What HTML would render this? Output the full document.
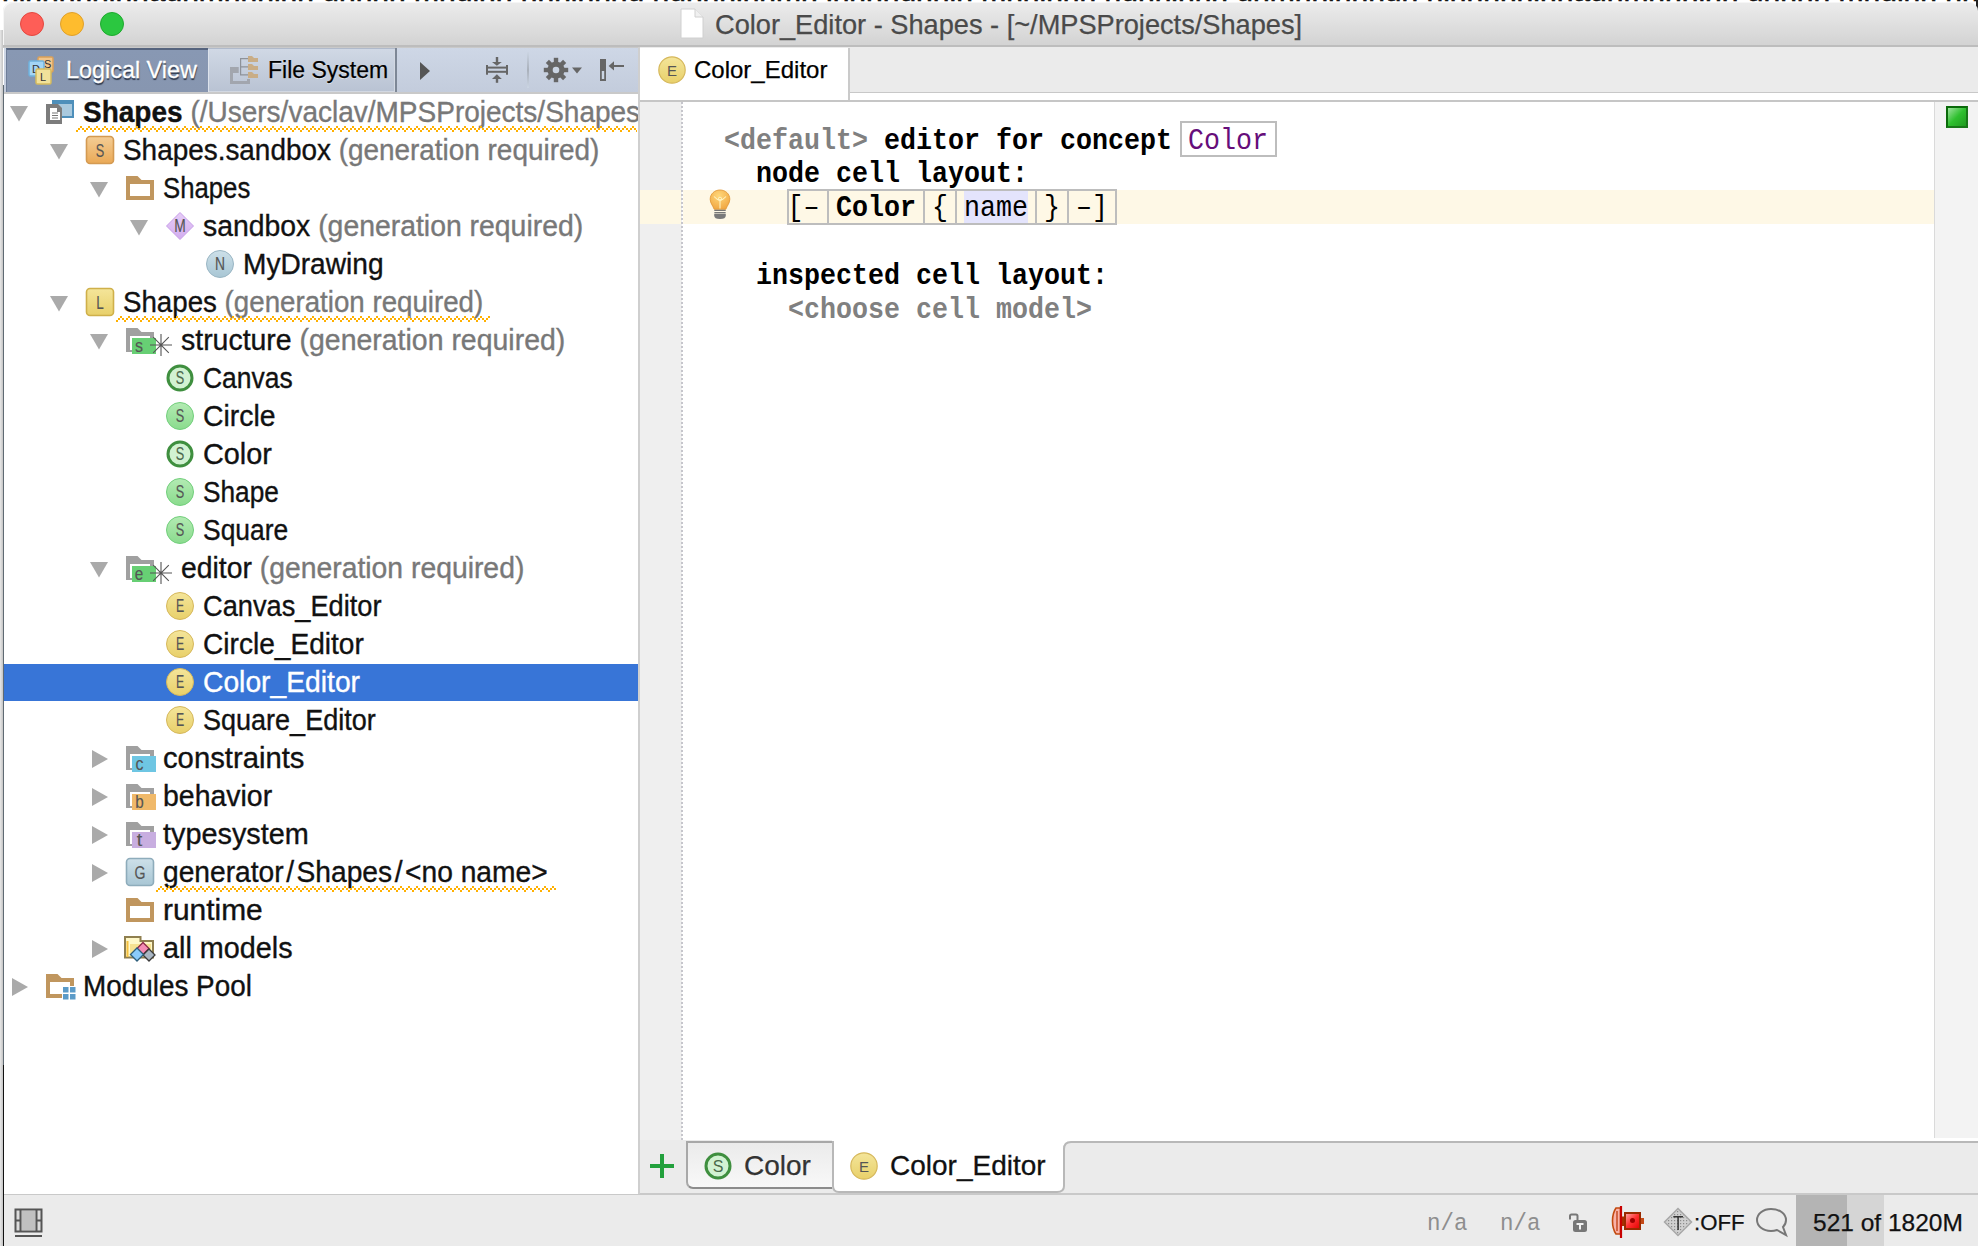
<!DOCTYPE html>
<html><head><meta charset="utf-8">
<style>
*{margin:0;padding:0;box-sizing:border-box}
html,body{width:1978px;height:1246px;overflow:hidden;background:#fff;font-family:"Liberation Sans",sans-serif}
.a{position:absolute}
svg.a{overflow:visible}
.row{position:absolute;height:38px;font-size:28px;line-height:38px;white-space:nowrap;color:#111;transform:scaleY(1.03);transform-origin:0 28.7px;-webkit-text-stroke:0.35px currentColor}
.g{color:#787878}
.m{position:absolute;font-family:"Liberation Mono",monospace;font-size:26.67px;line-height:normal;white-space:nowrap;color:#000;transform:scaleY(1.1);transform-origin:0 22.2px}
.mb{font-weight:bold}
.wavy{height:6px}
</style></head>
<body>
<svg width="0" height="0" style="position:absolute">
<defs>
 <linearGradient id="gOr" x1="0" y1="0" x2="0" y2="1"><stop offset="0" stop-color="#f4cd95"/><stop offset="1" stop-color="#eaa956"/></linearGradient>
 <linearGradient id="gYe" x1="0" y1="0" x2="0" y2="1"><stop offset="0" stop-color="#f4e59a"/><stop offset="1" stop-color="#e8d06a"/></linearGradient>
 <linearGradient id="gGr" x1="0" y1="0" x2="0" y2="1"><stop offset="0" stop-color="#b3ebb3"/><stop offset="1" stop-color="#8adb8d"/></linearGradient>
 <linearGradient id="gBl" x1="0" y1="0" x2="0" y2="1"><stop offset="0" stop-color="#cde0e9"/><stop offset="1" stop-color="#a8c6d4"/></linearGradient>
 <linearGradient id="gPu" x1="0" y1="0" x2="0" y2="1"><stop offset="0" stop-color="#e6cdf7"/><stop offset="1" stop-color="#d2acef"/></linearGradient>
 <pattern id="wave" width="8" height="6" patternUnits="userSpaceOnUse"><rect x="0" y="4" width="2" height="2" fill="#ffb000"/><rect x="2" y="2" width="2" height="2" fill="#ffb000"/><rect x="4" y="0" width="2" height="2" fill="#ffb000"/><rect x="6" y="2" width="2" height="2" fill="#ffb000"/></pattern>
 <symbol id="i-proj" viewBox="0 0 60 36"><rect x="11" y="7" width="20" height="16" fill="#a9c9de" stroke="#4e8fba" stroke-width="2"/><rect x="10" y="6" width="22" height="4" fill="#4e8fba"/><path d="M4 10H16L20 14V30H4Z" fill="#7c7c7c"/><path d="M8 14H15V18H18V26H8Z" fill="#fff"/><path d="M10 19h6M10 21.5h6M10 24h6" stroke="#777" stroke-width="1.2"/></symbol>
 <symbol id="i-sbox" viewBox="0 0 60 36"><rect x="4.5" y="4.5" width="27" height="27" rx="3.5" fill="url(#gOr)" stroke="#d49a52" stroke-width="1.6"/><text x="18" y="25" font-size="17.5" text-anchor="middle" fill="#555" font-family="Liberation Sans" textLength="8.5" lengthAdjust="spacingAndGlyphs" stroke="#555" stroke-width="0.15">S</text></symbol>
 <symbol id="i-lbox" viewBox="0 0 60 36"><rect x="4.5" y="4.5" width="27" height="27" rx="3.5" fill="url(#gYe)" stroke="#cfb04a" stroke-width="1.6"/><text x="18" y="25" font-size="17.5" text-anchor="middle" fill="#555" font-family="Liberation Sans" textLength="7.5" lengthAdjust="spacingAndGlyphs" stroke="#555" stroke-width="0.15">L</text></symbol>
 <symbol id="i-gbox" viewBox="0 0 60 36"><rect x="4.5" y="4.5" width="27" height="27" rx="3.5" fill="url(#gBl)" stroke="#8eacbb" stroke-width="1.6"/><text x="18" y="25" font-size="17.5" text-anchor="middle" fill="#555" font-family="Liberation Sans" textLength="11" lengthAdjust="spacingAndGlyphs" stroke="#555" stroke-width="0.15">G</text></symbol>
 <symbol id="i-fold" viewBox="0 0 60 36"><path d="M4 6H15.5L19.5 10H32V30H4Z" fill="#c0965e"/><rect x="8" y="14" width="20" height="12" fill="#fff"/></symbol>
 <symbol id="i-mpool" viewBox="0 0 60 36"><path d="M4 6H15.5L19.5 10H32V30H4Z" fill="#c0965e"/><rect x="8" y="14" width="20" height="12" fill="#fff"/><rect x="20" y="18" width="14" height="14" fill="#fff"/><rect x="21" y="19" width="5.5" height="5.5" fill="#5b9bc8"/><rect x="28" y="19" width="5.5" height="5.5" fill="#5b9bc8"/><rect x="21" y="26" width="5.5" height="5.5" fill="#5b9bc8"/><rect x="28" y="26" width="5.5" height="5.5" fill="#5b9bc8"/></symbol>
 <symbol id="i-mdia" viewBox="0 0 60 36"><path d="M18 4.5L31.5 18L18 31.5L4.5 18Z" fill="url(#gPu)" stroke="#c79de8" stroke-linejoin="round"/><text x="18" y="24" font-size="17.5" text-anchor="middle" fill="#555" font-family="Liberation Sans" textLength="11.5" lengthAdjust="spacingAndGlyphs" stroke="#555" stroke-width="0.15">M</text></symbol>
 <symbol id="i-ncir" viewBox="0 0 60 36"><circle cx="18" cy="18" r="13.5" fill="url(#gBl)" stroke="#9ab6c4"/><text x="18" y="24" font-size="17.5" text-anchor="middle" fill="#555" font-family="Liberation Sans" textLength="10" lengthAdjust="spacingAndGlyphs" stroke="#555" stroke-width="0.15">N</text></symbol>
 <symbol id="i-scir" viewBox="0 0 60 36"><circle cx="18" cy="18" r="13.5" fill="url(#gGr)" stroke="#72cf7c"/><text x="18" y="24" font-size="17.5" text-anchor="middle" fill="#555" font-family="Liberation Sans" textLength="8.5" lengthAdjust="spacingAndGlyphs" stroke="#555" stroke-width="0.15">S</text></symbol>
 <symbol id="i-sdark" viewBox="0 0 60 36"><circle cx="18" cy="18" r="12" fill="#d2f2d2" stroke="#3f8f3f" stroke-width="3"/><text x="18" y="24" font-size="17.5" text-anchor="middle" fill="#4a6a4a" font-family="Liberation Sans" textLength="8.5" lengthAdjust="spacingAndGlyphs" stroke="#555" stroke-width="0.15">S</text></symbol>
 <symbol id="i-ecir" viewBox="0 0 60 36"><circle cx="18" cy="18" r="13.5" fill="url(#gYe)" stroke="#d6b85c"/><text x="18" y="24" font-size="17.5" text-anchor="middle" fill="#555" font-family="Liberation Sans" textLength="8.2" lengthAdjust="spacingAndGlyphs" stroke="#555" stroke-width="0.15">E</text></symbol>
 <symbol id="i-gfold" viewBox="0 0 60 36"><path d="M4 6H15.5L19.5 10H32V30H4Z" fill="#a0a0a0"/><rect x="8" y="14" width="20" height="14" fill="#fff"/></symbol>
 <symbol id="i-fs" viewBox="0 0 60 36"><path d="M4 6H15.5L19.5 10H32V30H4Z" fill="#a0a0a0"/><rect x="8" y="14" width="20" height="14" fill="#fff"/><rect x="10" y="16" width="24" height="16" fill="#67cf74"/><text x="17" y="30" font-size="17.5" text-anchor="middle" fill="#555" font-family="Liberation Sans" textLength="8" lengthAdjust="spacingAndGlyphs" stroke="#555" stroke-width="0.15">s</text><path d="M39 12V34M28 23H50M31.2 15.2L46.8 30.8M46.8 15.2L31.2 30.8" stroke="#555" stroke-width="1.1"/></symbol>
 <symbol id="i-fe" viewBox="0 0 60 36"><path d="M4 6H15.5L19.5 10H32V30H4Z" fill="#a0a0a0"/><rect x="8" y="14" width="20" height="14" fill="#fff"/><rect x="10" y="16" width="24" height="16" fill="#67cf74"/><text x="17" y="30" font-size="17.5" text-anchor="middle" fill="#555" font-family="Liberation Sans" textLength="8.5" lengthAdjust="spacingAndGlyphs" stroke="#555" stroke-width="0.15">e</text><path d="M39 12V34M28 23H50M31.2 15.2L46.8 30.8M46.8 15.2L31.2 30.8" stroke="#555" stroke-width="1.1"/></symbol>
 <symbol id="i-fc" viewBox="0 0 60 36"><path d="M4 6H15.5L19.5 10H32V30H4Z" fill="#a0a0a0"/><rect x="8" y="14" width="20" height="14" fill="#fff"/><rect x="10" y="16" width="24" height="16" fill="#6ec6e3"/><text x="17.5" y="30" font-size="17.5" text-anchor="middle" fill="#555" font-family="Liberation Sans" textLength="8" lengthAdjust="spacingAndGlyphs" stroke="#555" stroke-width="0.15">c</text></symbol>
 <symbol id="i-fb" viewBox="0 0 60 36"><path d="M4 6H15.5L19.5 10H32V30H4Z" fill="#a0a0a0"/><rect x="8" y="14" width="20" height="14" fill="#fff"/><rect x="10" y="16" width="24" height="16" fill="#f0b96a"/><text x="17.5" y="30" font-size="17.5" text-anchor="middle" fill="#555" font-family="Liberation Sans" textLength="8.5" lengthAdjust="spacingAndGlyphs" stroke="#555" stroke-width="0.15">b</text></symbol>
 <symbol id="i-ft" viewBox="0 0 60 36"><path d="M4 6H15.5L19.5 10H32V30H4Z" fill="#a0a0a0"/><rect x="8" y="14" width="20" height="14" fill="#fff"/><rect x="10" y="16" width="24" height="16" fill="#c8aee0"/><text x="17.5" y="30" font-size="17.5" text-anchor="middle" fill="#555" font-family="Liberation Sans" textLength="5.5" lengthAdjust="spacingAndGlyphs" stroke="#555" stroke-width="0.15">t</text></symbol>
 <symbol id="i-allm" viewBox="0 0 60 36"><path d="M3 7H18.5V11H31V27.5H3Z" fill="#fff8c8" stroke="#8f7f4f" stroke-width="2"/><rect x="4.5" y="11" width="2" height="16" fill="#f5c040"/><rect x="8" y="14" width="21" height="12" fill="#f6e291"/><path d="M21 12.5L27 18.5L21 24.5L15 18.5Z" fill="#f58cb4" stroke="#8a2a48" stroke-width="1.3"/><path d="M27 19L33 25L27 31L21 25Z" fill="#a9b6c3" stroke="#3a3a3a" stroke-width="1.3"/><path d="M15 18L21.5 24.5L15 31L8.5 24.5Z" fill="#8acbfa" stroke="#2d5e7a" stroke-width="1.3"/></symbol>
</defs>
</svg>

<!-- background behind window -->
<div class="a" style="left:2px;top:-22px;width:1976px;height:25px;font-size:30px;line-height:25px;color:#111;white-space:nowrap;overflow:hidden;-webkit-text-stroke:0.6px #111">nlhnnhnlnnaunmnnnlhn unnhn mnulnh nnnlnhnu nunhnlnnmn lnnhnunnln mnnlnhn nunnlhnn unmnnlnhnun nlhnnhnlnnaunmnnnlhn unnhn mnulnh nnnlnhnu nunhnlnnmn lnnhnunnln mnnlnhn nunnlhnn</div><div class="a" style="left:1975.5px;top:0;width:2.5px;height:11px;background:#222"></div>
<div class="a" style="left:0;top:30px;width:2.5px;height:1216px;background:linear-gradient(90deg,#e8e8e8,#c4c4c4)"></div><div class="a" style="left:2.5px;top:85px;width:1.5px;height:980px;background:#5f6a73"></div>
<div class="a" style="left:2.5px;top:1065px;width:1.5px;height:181px;background:#111"></div>

<!-- title bar -->
<div class="a" style="left:3px;top:1.5px;width:1975px;height:45.5px;background:linear-gradient(#ececec,#d3d3d3);border-radius:9px 9px 0 0;border-bottom:2px solid #bdbdbd;box-shadow:inset 1px 1px 0 #f6f6f6"></div>
<div class="a" style="left:20px;top:12px;width:24px;height:24px;border-radius:50%;background:#fe5e57;border:1px solid #e4473f"></div>
<div class="a" style="left:60px;top:12px;width:24px;height:24px;border-radius:50%;background:#febc2e;border:1px solid #e0a02a"></div>
<div class="a" style="left:100px;top:12px;width:24px;height:24px;border-radius:50%;background:#2bc740;border:1px solid #1eaa2e"></div>
<svg class="a" style="left:680px;top:8px" width="24" height="31"><path d="M1 1H15L23 9V30H1Z" fill="#fff" stroke="#d0d0d0" stroke-width="1"/><path d="M15 1V9H23" fill="#f0f0f0" stroke="#d0d0d0"/></svg>
<div class="a" style="left:715px;top:8.5px;font-size:27.2px;line-height:normal;color:#4a4a4a;white-space:nowrap;-webkit-text-stroke:0.25px currentColor">Color_Editor - Shapes - [~/MPSProjects/Shapes]</div>

<!-- left toolbar -->
<div class="a" style="left:3px;top:46.5px;width:1975px;height:1.5px;background:#c9c9c9"></div><div class="a" style="left:4px;top:48px;width:634px;height:46px;background:linear-gradient(#ced7e6,#c3ccdc);border-bottom:2px solid #c9c9c9"></div>
<div class="a" style="left:6px;top:48px;width:202px;height:44px;background:linear-gradient(#8898b3,#8796b0);border-top:2px solid #56647e;border-left:1px solid #6e7d98"></div>
<div class="a" style="left:208px;top:48px;width:187px;height:44px;background:linear-gradient(#d0d8e5,#b9c3d3);border-top:1px solid #b0bacb;box-shadow:inset 1px 0 0 #dde3ec,inset -1px -1px 0 #d2d8e2"></div>
<div class="a" style="left:395px;top:48px;width:2px;height:44px;background:#7d8796"></div>
<!-- toolbar icons -->
<svg class="a" style="left:27px;top:55px" width="32" height="32"><rect x="11" y="2" width="15" height="15" rx="1.5" fill="#f2c58a" stroke="#d9a05a" stroke-width="1.5"/><text x="17" y="13" font-size="11" fill="#333" font-family="Liberation Sans">S</text><rect x="2" y="6" width="15" height="15" rx="1.5" fill="#a3d5f5" stroke="#6fb1dd" stroke-width="1.5"/><text x="5" y="18" font-size="11" fill="#333" font-family="Liberation Sans">D</text><rect x="9" y="14" width="15" height="15" rx="1.5" fill="#f1e19a" stroke="#d5bb5e" stroke-width="1.5"/><text x="13" y="26" font-size="11" fill="#333" font-family="Liberation Sans">L</text></svg>
<div class="a" style="left:66px;top:56.5px;font-size:23.4px;line-height:normal;color:#fff;white-space:nowrap;text-shadow:0.5px 1.5px 1px #2c3648;-webkit-text-stroke:0.3px #fff">Logical View</div>
<svg class="a" style="left:228px;top:54px" width="32" height="32"><path d="M2 13H10.7V19H5V27H19V25H22V30H2Z" fill="#a2a6ae"/><path d="M12.6 4.5V21M12 4.6H20M12 12.8H20M12 20.8H20" stroke="#8e9299" stroke-width="1.2" fill="none"/><path d="M20 2H24L26 4H30V8H20Z M20 10H24L26 12H30V16H20Z M20 18H24L26 20H30V24H20Z" fill="#c9ad86"/></svg>
<div class="a" style="left:268px;top:57px;font-size:23px;line-height:normal;color:#000;white-space:nowrap;text-shadow:0 1px 0 #e8ecf2;-webkit-text-stroke:0.25px currentColor">File System</div>
<svg class="a" style="left:419px;top:61px" width="12" height="20"><path d="M1 1L11 10L1 19Z" fill="#555"/></svg>
<svg class="a" style="left:485px;top:56px" width="24" height="28"><g fill="#666"><rect x="10.8" y="1" width="2.4" height="5.5"/><path d="M7 6H16.8L11.9 9.8Z"/><rect x="1" y="10.6" width="22" height="2"/><rect x="1" y="14.8" width="22" height="2"/><rect x="1" y="9" width="2" height="9.7"/><rect x="21" y="9" width="2" height="9.7"/><path d="M7 23.1H16.8L11.9 18.3Z"/><rect x="10.8" y="22.5" width="2.4" height="4.3"/></g></svg>
<div class="a" style="left:526.5px;top:52px;width:2.5px;height:36px;background:linear-gradient(#cbd5e3,#a9b0bb,#cbd5e3)"></div>
<svg class="a" style="left:543px;top:57px" width="44" height="26"><g fill="#666"><circle cx="13" cy="13" r="8.6"/><rect x="10.8" y="0.8" width="4.4" height="6" transform="rotate(0 13 13)"/><rect x="10.8" y="0.8" width="4.4" height="6" transform="rotate(45 13 13)"/><rect x="10.8" y="0.8" width="4.4" height="6" transform="rotate(90 13 13)"/><rect x="10.8" y="0.8" width="4.4" height="6" transform="rotate(135 13 13)"/><rect x="10.8" y="0.8" width="4.4" height="6" transform="rotate(180 13 13)"/><rect x="10.8" y="0.8" width="4.4" height="6" transform="rotate(225 13 13)"/><rect x="10.8" y="0.8" width="4.4" height="6" transform="rotate(270 13 13)"/><rect x="10.8" y="0.8" width="4.4" height="6" transform="rotate(315 13 13)"/><path d="M29 10.5h10l-5 6z"/></g><circle cx="13" cy="13" r="3.3" fill="#cbd5e3"/></svg>
<svg class="a" style="left:599px;top:58px" width="30" height="26"><rect x="1" y="1" width="6" height="22" fill="#666"/><rect x="2.8" y="13" width="2.4" height="8" fill="#cbd5e3"/><path d="M9.6 8L15 3.3V12.6Z" fill="#666"/><rect x="14.5" y="7" width="10.5" height="2" fill="#666"/></svg>

<!-- tree -->
<div class="a" style="left:4px;top:94px;width:634px;height:1100px;background:#fff"></div>
<svg class="a" style="left:10px;top:106px" width="18" height="16"><path d="M0 0H18L9 15.5Z" fill="#aaa"/></svg>
<svg class="a" style="left:42px;top:94px" width="60" height="36"><use href="#i-proj" width="60" height="36"/></svg>
<div class="row" style="left:83px;top:94px"><b>Shapes</b> <span class="g">(/Users/vaclav/MPSProjects/Shapes</span></div>
<svg class="a" style="left:76px;top:126px" width="561" height="6"><rect width="561" height="6" fill="url(#wave)"/></svg>
<svg class="a" style="left:50px;top:144px" width="18" height="16"><path d="M0 0H18L9 15.5Z" fill="#aaa"/></svg>
<svg class="a" style="left:82px;top:132px" width="60" height="36"><use href="#i-sbox" width="60" height="36"/></svg>
<div class="row" style="left:123px;top:132px;transform:scale(0.9966,1.03)">Shapes.sandbox <span class="g">(generation required)</span></div>
<svg class="a" style="left:90px;top:182px" width="18" height="16"><path d="M0 0H18L9 15.5Z" fill="#aaa"/></svg>
<svg class="a" style="left:122px;top:170px" width="60" height="36"><use href="#i-fold" width="60" height="36"/></svg>
<div class="row" style="left:163px;top:170px;transform:scale(0.9191,1.03)">Shapes</div>
<svg class="a" style="left:130px;top:220px" width="18" height="16"><path d="M0 0H18L9 15.5Z" fill="#aaa"/></svg>
<svg class="a" style="left:162px;top:208px" width="60" height="36"><use href="#i-mdia" width="60" height="36"/></svg>
<div class="row" style="left:203px;top:208px;transform:scale(1.0134,1.03)">sandbox <span class="g">(generation required)</span></div>
<svg class="a" style="left:202px;top:246px" width="60" height="36"><use href="#i-ncir" width="60" height="36"/></svg>
<div class="row" style="left:243px;top:246px;transform:scale(1.0036,1.03)">MyDrawing</div>
<svg class="a" style="left:50px;top:296px" width="18" height="16"><path d="M0 0H18L9 15.5Z" fill="#aaa"/></svg>
<svg class="a" style="left:82px;top:284px" width="60" height="36"><use href="#i-lbox" width="60" height="36"/></svg>
<div class="row" style="left:123px;top:284px;transform:scale(0.9890,1.03)">Shapes <span class="g">(generation required)</span></div>
<svg class="a" style="left:116px;top:316px" width="374" height="6"><rect width="374" height="6" fill="url(#wave)"/></svg>
<svg class="a" style="left:90px;top:334px" width="18" height="16"><path d="M0 0H18L9 15.5Z" fill="#aaa"/></svg>
<svg class="a" style="left:122px;top:322px" width="60" height="36"><use href="#i-fs" width="60" height="36"/></svg>
<div class="row" style="left:181px;top:322px;transform:scale(1.0160,1.03)">structure <span class="g">(generation required)</span></div>
<svg class="a" style="left:162px;top:360px" width="60" height="36"><use href="#i-sdark" width="60" height="36"/></svg>
<div class="row" style="left:203px;top:360px;transform:scale(0.9447,1.03)">Canvas</div>
<svg class="a" style="left:162px;top:398px" width="60" height="36"><use href="#i-scir" width="60" height="36"/></svg>
<div class="row" style="left:203px;top:398px;transform:scale(1.0141,1.03)">Circle</div>
<svg class="a" style="left:162px;top:436px" width="60" height="36"><use href="#i-sdark" width="60" height="36"/></svg>
<div class="row" style="left:203px;top:436px;transform:scale(1.0299,1.03)">Color</div>
<svg class="a" style="left:162px;top:474px" width="60" height="36"><use href="#i-scir" width="60" height="36"/></svg>
<div class="row" style="left:203px;top:474px;transform:scale(0.9375,1.03)">Shape</div>
<svg class="a" style="left:162px;top:512px" width="60" height="36"><use href="#i-scir" width="60" height="36"/></svg>
<div class="row" style="left:203px;top:512px;transform:scale(0.9438,1.03)">Square</div>
<svg class="a" style="left:90px;top:562px" width="18" height="16"><path d="M0 0H18L9 15.5Z" fill="#aaa"/></svg>
<svg class="a" style="left:122px;top:550px" width="60" height="36"><use href="#i-fe" width="60" height="36"/></svg>
<div class="row" style="left:181px;top:550px;transform:scale(1.0118,1.03)">editor <span class="g">(generation required)</span></div>
<svg class="a" style="left:162px;top:588px" width="60" height="36"><use href="#i-ecir" width="60" height="36"/></svg>
<div class="row" style="left:203px;top:588px;transform:scale(0.9717,1.03)">Canvas_Editor</div>
<svg class="a" style="left:162px;top:626px" width="60" height="36"><use href="#i-ecir" width="60" height="36"/></svg>
<div class="row" style="left:203px;top:626px;transform:scale(1.0031,1.03)">Circle_Editor</div>
<div class="a" style="left:4px;top:664px;width:634px;height:37px;background:#3875d7"></div>
<svg class="a" style="left:162px;top:664px" width="60" height="36"><use href="#i-ecir" width="60" height="36"/></svg>
<div class="row" style="left:203px;top:664px;color:#fff;transform:scale(1.0090,1.03)">Color_Editor</div>
<svg class="a" style="left:162px;top:702px" width="60" height="36"><use href="#i-ecir" width="60" height="36"/></svg>
<div class="row" style="left:203px;top:702px;transform:scale(0.9648,1.03)">Square_Editor</div>
<svg class="a" style="left:92px;top:750px" width="16" height="18"><path d="M0 0L16 9L0 18Z" fill="#aaa"/></svg>
<svg class="a" style="left:122px;top:740px" width="60" height="36"><use href="#i-fc" width="60" height="36"/></svg>
<div class="row" style="left:163px;top:740px;transform:scale(1.0444,1.03)">constraints</div>
<svg class="a" style="left:92px;top:788px" width="16" height="18"><path d="M0 0L16 9L0 18Z" fill="#aaa"/></svg>
<svg class="a" style="left:122px;top:778px" width="60" height="36"><use href="#i-fb" width="60" height="36"/></svg>
<div class="row" style="left:163px;top:778px;transform:scale(1.0159,1.03)">behavior</div>
<svg class="a" style="left:92px;top:826px" width="16" height="18"><path d="M0 0L16 9L0 18Z" fill="#aaa"/></svg>
<svg class="a" style="left:122px;top:816px" width="60" height="36"><use href="#i-ft" width="60" height="36"/></svg>
<div class="row" style="left:163px;top:816px;transform:scale(1.0300,1.03)">typesystem</div>
<svg class="a" style="left:92px;top:864px" width="16" height="18"><path d="M0 0L16 9L0 18Z" fill="#aaa"/></svg>
<svg class="a" style="left:122px;top:854px" width="60" height="36"><use href="#i-gbox" width="60" height="36"/></svg>
<div class="row" style="left:163px;top:854px;transform:scale(1.0066,1.03)">generator<span style="margin:0 2.5px">/</span>Shapes<span style="margin:0 2.5px">/</span>&lt;no name&gt;</div>
<svg class="a" style="left:156px;top:886px" width="400" height="6"><rect width="400" height="6" fill="url(#wave)"/></svg>
<svg class="a" style="left:122px;top:892px" width="60" height="36"><use href="#i-fold" width="60" height="36"/></svg>
<div class="row" style="left:163px;top:892px;transform:scale(1.0685,1.03)">runtime</div>
<svg class="a" style="left:92px;top:940px" width="16" height="18"><path d="M0 0L16 9L0 18Z" fill="#aaa"/></svg>
<svg class="a" style="left:122px;top:930px" width="60" height="36"><use href="#i-allm" width="60" height="36"/></svg>
<div class="row" style="left:163px;top:930px;transform:scale(1.0280,1.03)">all models</div>
<svg class="a" style="left:12px;top:978px" width="16" height="18"><path d="M0 0L16 9L0 18Z" fill="#aaa"/></svg>
<svg class="a" style="left:42px;top:968px" width="60" height="36"><use href="#i-mpool" width="60" height="36"/></svg>
<div class="row" style="left:83px;top:968px;transform:scale(0.9952,1.03)">Modules Pool</div>
<!-- splitter -->
<div class="a" style="left:638px;top:47px;width:2px;height:1147px;background:#cfcfcf"></div>

<!-- editor tabs -->
<div class="a" style="left:640px;top:47px;width:1338px;height:46px;background:#ebebeb;border-bottom:1px solid #c8c8c8"></div>
<div class="a" style="left:640px;top:48px;width:210px;height:53px;background:#fff;border-right:2px solid #cacaca"></div>
<svg class="a" style="left:658px;top:56px" width="28" height="28"><circle cx="14" cy="14" r="13.2" fill="url(#gYe)" stroke="#d6b85c" stroke-width="1.2"/><text x="14" y="20" font-size="15" text-anchor="middle" fill="#555" font-family="Liberation Sans">E</text></svg>
<div class="a" style="left:694px;top:56px;font-size:24px;line-height:normal;color:#000;white-space:nowrap;-webkit-text-stroke:0.25px currentColor">Color_Editor</div>
<div class="a" style="left:640px;top:100px;width:1338px;height:2px;background:#c6c6c6"></div>

<!-- editor -->
<div class="a" style="left:640px;top:102px;width:1338px;height:1038px;background:#fff"></div>
<div class="a" style="left:640px;top:102px;width:42px;height:1038px;background:#efefef"></div>
<div class="a" style="left:681px;top:102px;width:2px;height:1038px;background:repeating-linear-gradient(#c6c6cc 0 2px,transparent 2px 4px)"></div>
<div class="a" style="left:1934px;top:102px;width:44px;height:1038px;background:#f3f3f3;border-left:1.5px solid #dadada"></div>
<div class="a" style="left:1946px;top:106px;width:22px;height:22px;background:linear-gradient(135deg,#9fe39f,#2fc02f 50%,#1f9a1f);border:2px solid #0a6a0a;border-right-color:#187818;border-bottom-color:#187818"></div>
<!-- highlighted line -->
<div class="a" style="left:640px;top:190px;width:41px;height:34px;background:#fef8e4"></div>
<div class="a" style="left:683px;top:190px;width:1251px;height:34px;background:#fef8e6"></div>
<div class="m mb" style="left:724px;top:126.8px;color:#808080">&lt;default&gt;</div>
<div class="m mb" style="left:884px;top:126.8px">editor for concept</div>
<div class="a" style="left:1180px;top:121px;width:97px;height:36px;border:2px solid #bdbdbd"></div>
<div class="m " style="left:1188px;top:126.8px;color:#660e7a">Color</div>
<div class="m mb" style="left:756px;top:159.8px">node cell layout:</div>
<div class="a" style="left:787px;top:189px;width:330px;height:36px;border:2px solid #bdbdbd"></div>
<div class="a" style="left:827px;top:190px;width:2px;height:34px;background:#bdbdbd"></div>
<div class="a" style="left:923px;top:190px;width:2px;height:34px;background:#bdbdbd"></div>
<div class="a" style="left:955px;top:190px;width:2px;height:34px;background:#bdbdbd"></div>
<div class="a" style="left:1035px;top:190px;width:2px;height:34px;background:#bdbdbd"></div>
<div class="a" style="left:1067px;top:190px;width:2px;height:34px;background:#bdbdbd"></div>
<div class="a" style="left:964px;top:191px;width:64px;height:32px;background:#e4e4fc"></div>
<div class="m " style="left:787.5px;top:193.8px">[&#8211;</div>
<div class="m mb" style="left:836px;top:193.8px">Color</div>
<div class="m " style="left:932px;top:193.8px">{</div>
<div class="m " style="left:964px;top:193.8px">name</div>
<div class="m " style="left:1044px;top:193.8px">}</div>
<div class="m " style="left:1076px;top:193.8px">&#8211;]</div>
<div class="m mb" style="left:756px;top:261.8px">inspected cell layout:</div>
<div class="m mb" style="left:788px;top:295.8px;color:#808080">&lt;choose cell model&gt;</div>
<svg class="a" style="left:709px;top:189px" width="22" height="31"><defs><radialGradient id="bulb" cx="0.45" cy="0.3" r="0.75"><stop offset="0" stop-color="#ffd77a"/><stop offset="1" stop-color="#f0a540"/></radialGradient></defs><path d="M11 1C5.5 1 1.2 5 1.2 10.2C1.2 14.2 3.8 16.5 5.2 20.3H16.8C18.2 16.5 20.8 14.2 20.8 10.2C20.8 5 16.5 1 11 1Z" fill="url(#bulb)" stroke="#e29a3a" stroke-width="0.9"/><path d="M5 7.5Q8 11 11 11Q14 11 17 7.5M11 10V19.5" fill="none" stroke="#fff3c0" stroke-width="1.1"/><circle cx="11" cy="10" r="1.8" fill="none" stroke="#fff3c0" stroke-width="1"/><rect x="5.2" y="20.8" width="11.6" height="1.3" rx="0.6" fill="#777"/><rect x="5.2" y="22.9" width="11.6" height="1.3" rx="0.6" fill="#777"/><path d="M5.2 24.8H16.8V26.5Q16.8 30 11 30Q5.2 30 5.2 26.5Z" fill="#7a7a7a"/></svg>

<!-- bottom tabs -->
<div class="a" style="left:640px;top:1140px;width:1338px;height:54px;background:#ebebeb;border-bottom:1px solid #c9c9c9"></div>
<svg class="a" style="left:650px;top:1154px" width="24" height="24"><path d="M12 0V24M0 12H24" stroke="#22a03c" stroke-width="4"/></svg>
<div class="a" style="left:686px;top:1141px;width:147px;height:48px;background:linear-gradient(#ebebeb,#f8f8f8);border:2px solid #a8a8a8;border-right-width:1px;border-bottom-color:#8c8c8c;border-radius:0 0 0 7px"></div>
<svg class="a" style="left:704px;top:1152px" width="28" height="28"><circle cx="14" cy="14" r="12" fill="#d2f2d2" stroke="#3f8f3f" stroke-width="3"/><text x="14" y="20" font-size="16" text-anchor="middle" fill="#4a6a4a" font-family="Liberation Sans">S</text></svg>
<div class="a" style="left:744px;top:1150px;font-size:28px;line-height:normal;color:#333;white-space:nowrap;-webkit-text-stroke:0.25px currentColor">Color</div>
<svg class="a" style="left:0;top:0" width="1978" height="1246"><path d="M832 1138V1186Q832 1192 838 1192H1058Q1064 1192 1064 1186V1138Z" fill="#fff"/><path d="M1064 1149Q1064 1142 1071 1142H1978V1193H1064Z" fill="#ebebeb"/><path d="M1064 1138V1149Q1064 1142 1071 1142H1978V1138Z" fill="#fff"/><path d="M833 1141V1186Q833 1192 839 1192H1057Q1064 1192 1064 1186V1149Q1064 1142 1071 1142H1978" fill="none" stroke="#b8b8b8" stroke-width="2"/></svg>
<svg class="a" style="left:850px;top:1152px" width="28" height="28"><circle cx="14" cy="14" r="13.2" fill="url(#gYe)" stroke="#d6b85c" stroke-width="1.2"/><text x="14" y="20" font-size="15" text-anchor="middle" fill="#555" font-family="Liberation Sans">E</text></svg>
<div class="a" style="left:890px;top:1150px;font-size:28px;line-height:normal;color:#111;white-space:nowrap;-webkit-text-stroke:0.3px currentColor">Color_Editor</div>

<!-- status bar -->
<div class="a" style="left:4px;top:1194px;width:1974px;height:52px;background:#ebebeb;border-top:1px solid #c9c9c9"></div>
<svg class="a" style="left:13.5px;top:1207.5px" width="30" height="30"><rect x="1.5" y="1.5" width="26" height="22" fill="#dcdcdc" stroke="#555" stroke-width="2"/><rect x="7.5" y="3" width="14" height="19" fill="#c0c0c0"/><path d="M6.5 1V24M22.5 1V24M1 12.5H6.5M22.5 12.5H28" stroke="#555" stroke-width="2"/><path d="M1 28H28" stroke="#555" stroke-width="2"/></svg>
<div class="m" style="left:1427px;top:1211px;font-size:22.5px;color:#8e8e8e">n/a</div>
<div class="m" style="left:1500px;top:1211px;font-size:22.5px;color:#8e8e8e">n/a</div>
<svg class="a" style="left:1568px;top:1213px" width="22" height="22"><path d="M2 6.5V3Q2 1.5 3.5 1.5H8Q9.5 1.5 9.5 3V8" fill="none" stroke="#777" stroke-width="2"/><rect x="5" y="7" width="14" height="12" rx="2.5" fill="#777"/><path d="M8.5 11H15.5M12 11V16.5" stroke="#f2f2f2" stroke-width="2"/></svg>
<svg class="a" style="left:1611px;top:1205px" width="36" height="34"><defs><linearGradient id="rf" x1="0" y1="0" x2="1" y2="1"><stop offset="0" stop-color="#ffb0b0"/><stop offset="0.5" stop-color="#ff3030"/><stop offset="1" stop-color="#e00000"/></linearGradient></defs><path d="M9.5 3H5Q1.5 8 1.5 16Q1.5 24 5 29H9.5Z" fill="#f9b2a8" stroke="#c24a10" stroke-width="1.6"/><path d="M6 6V26" stroke="#b83000" stroke-width="1.2"/><rect x="11" y="11.5" width="3" height="9.5" fill="#a83000"/><path d="M29 13H33V19H29Z" fill="#c44a18"/><rect x="14" y="8" width="15" height="16" fill="url(#rf)" stroke="#9a2a00" stroke-width="2"/><circle cx="21.5" cy="15.5" r="2.5" fill="#a00000"/><path d="M10 1V33" stroke="#c80000" stroke-width="2.2"/></svg>
<svg class="a" style="left:1664px;top:1207px" width="30" height="30"><defs><pattern id="dots" width="3" height="3" patternUnits="userSpaceOnUse"><rect width="3" height="3" fill="#d0d0d0"/><rect x="1" y="1" width="1.2" height="1.2" fill="#8c8c8c"/></pattern></defs><path d="M14 1.5L27.5 15L14 28.5L0.5 15Z" fill="url(#dots)" stroke="#a8a8a8" stroke-width="1.5"/><path d="M9.3 9.8H19M14.1 9.8V23" stroke="#333" stroke-width="1.5"/></svg>
<div class="a" style="left:1694px;top:1209.5px;font-size:22.2px;line-height:normal;color:#111;white-space:nowrap;-webkit-text-stroke:0.25px currentColor">:OFF</div>
<svg class="a" style="left:1755px;top:1207px" width="34" height="30"><path d="M16 2C8 2 2 7 2 13C2 19 8 24 16 24C18 24 20 23.7 22 23L31 28L28 20C30 18 31 16 31 13C31 7 25 2 16 2Z" fill="none" stroke="#777" stroke-width="2"/></svg>
<div class="a" style="left:1796px;top:1195px;width:51px;height:51px;background:#b4b4b4"></div>
<div class="a" style="left:1847px;top:1195px;width:37px;height:51px;background:#d5d5d5"></div>
<div class="a" style="left:1813px;top:1209px;font-size:24.5px;line-height:normal;color:#111;white-space:nowrap;-webkit-text-stroke:0.25px currentColor">521 of 1820M</div>
</body></html>
